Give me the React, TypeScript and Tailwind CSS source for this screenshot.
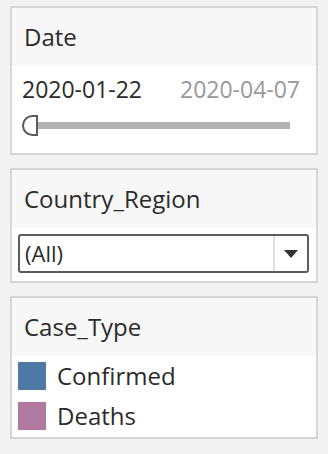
const font = { fontFamily: '"Open Sans", "Noto Sans", sans-serif' }

function Card({ title, children }: { title: string; children: React.ReactNode }) {
  return (
    <div className="border-2 border-[#d6d6d6] bg-white">
      <div className="h-[58px] bg-[#f7f7f7] pl-[12px] flex items-center text-[24px] text-[#2b2b2b]">{title}</div>
      {children}
    </div>
  )
}

export default function App() {
  return (
    <div className="w-[328px] h-[454px] bg-[#f2f2f2] px-[10px] pt-[6px] flex flex-col gap-[13px]" style={font}>
      <Card title="Date">
        <div className="h-[87px] pl-[10px] pr-[16px] pt-[9px]">
          <div className="flex justify-between text-[23px] leading-[28px]">
            <span className="text-[#2b2b2b]">2020-01-22</span>
            <span className="text-[#999999]">2020-04-07</span>
          </div>
          <div className="relative mt-[12px] h-[21px] w-[268px]">
            <div className="absolute left-[14px] right-0 top-[7px] h-[7px] bg-[#b3b3b3]" />
            <div className="absolute left-0 top-0 w-[16px] h-[21px] bg-white border-2 border-[#5a5a5a] rounded-l-full" />
          </div>
        </div>
      </Card>
      <Card title="Country_Region">
        <div className="h-[53px] pt-[6px] pl-[6px] pr-[7px]">
          <div className="h-[39px] border-2 border-[#5c5c5c] rounded-[3px] flex items-center">
            <span className="flex-1 pl-[5px] text-[22px] text-[#2b2b2b]">(All)</span>
            <div className="w-[34px] h-full border-l-2 border-[#e0e0e0] flex items-center justify-center">
              <svg width="14" height="8" viewBox="0 0 14 8">
                <path d="M0 0 H14 L7 8 Z" fill="#333" />
              </svg>
            </div>
          </div>
        </div>
      </Card>
      <Card title="Case_Type">
        <div className="h-[81px] pt-[6px] pl-[6px] flex flex-col gap-[12px]">
          <div className="flex items-center gap-[11px] h-[28px]">
            <div className="w-[28px] h-[28px] bg-[#4e79a7]" />
            <span className="text-[24px] text-[#2b2b2b]">Confirmed</span>
          </div>
          <div className="flex items-center gap-[11px] h-[28px]">
            <div className="w-[28px] h-[28px] bg-[#b07aa1]" />
            <span className="text-[24px] text-[#2b2b2b]">Deaths</span>
          </div>
        </div>
      </Card>
    </div>
  )
}
